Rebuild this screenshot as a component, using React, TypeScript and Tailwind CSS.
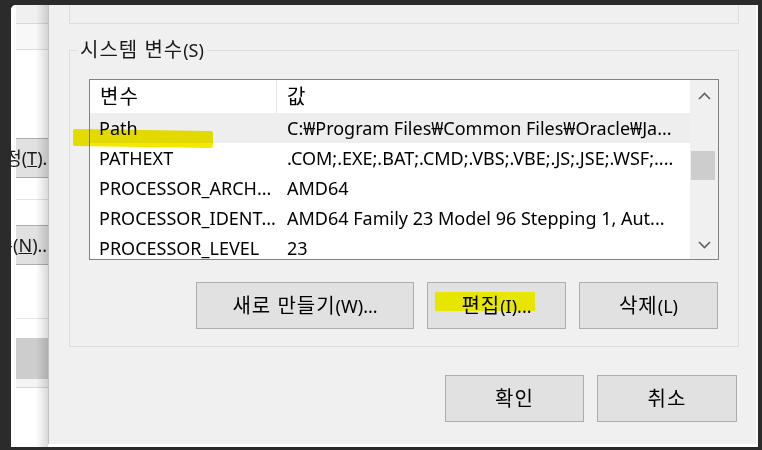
import React from 'react';

const rows = [
  { name: 'Path', value: 'C:₩Program Files₩Common Files₩Oracle₩Ja...', selected: true },
  { name: 'PATHEXT', value: '.COM;.EXE;.BAT;.CMD;.VBS;.VBE;.JS;.JSE;.WSF;....' },
  { name: 'PROCESSOR_ARCH...', value: 'AMD64' },
  { name: 'PROCESSOR_IDENT...', value: 'AMD64 Family 23 Model 96 Stepping 1, Aut...' },
  { name: 'PROCESSOR_LEVEL', value: '23' },
];

// Hangul runs are drawn a bit larger, the way Malgun Gothic sits next to Segoe UI
const KText = ({ text }: { text: string }) => (
  <>
    {text.split(/([\uAC00-\uD7A3]+(?: [\uAC00-\uD7A3]+)*)/).map((part, i) =>
      /[\uAC00-\uD7A3]/.test(part) ? (
        <span key={i} className="text-[20px] tracking-[1px]">
          {part}
        </span>
      ) : (
        <React.Fragment key={i}>{part}</React.Fragment>
      )
    )}
  </>
);

const Chevron = ({ up }: { up?: boolean }) => (
  <svg width="13" height="8" viewBox="0 0 13 8" className="block">
    <polyline
      points={up ? '1,7 6.5,1.5 12,7' : '1,1 6.5,6.5 12,1'}
      fill="none"
      stroke="#606060"
      strokeWidth="1.6"
    />
  </svg>
);

const WinButton = ({ label, className = '', children }: { label: string; className?: string; children?: React.ReactNode }) => (
  <div
    className={`relative flex items-center justify-center h-[47px] bg-[#e1e1e1] border border-[#adadad] text-[18px] text-black ${className}`}
  >
    {children}
    <span className="relative">
      <KText text={label} />
    </span>
  </div>
);

const BackWindow = () => (
  <div className="relative w-[37px] h-full bg-white pl-[5px] flex flex-col overflow-hidden text-[18px] text-[#1a1a1a]">
    <div className="h-[19px] bg-[#f0f0f0] border-b border-[#d9d9d9] shrink-0" />
    <div className="h-[26px] bg-[#f8f8f8] border-b border-[#dedede] shrink-0" />
    <div className="h-[88px] shrink-0" />
    <div className="h-[40px] shrink-0 bg-[#e1e1e1] border-y border-[#adadad] flex items-center justify-end whitespace-nowrap">
      <span className="-mr-[9px]">
        설정(<u>T</u>)...
      </span>
    </div>
    <div className="h-[22px] shrink-0 border-b border-[#e3e3e3]" />
    <div className="h-[25px] shrink-0" />
    <div className="h-[40px] shrink-0 bg-[#e1e1e1] border-y border-[#adadad] flex items-center justify-end whitespace-nowrap">
      <span className="-mr-[4px]">
        환경 변수(<u>N</u>)...
      </span>
    </div>
    <div className="h-[54px] shrink-0 border-b border-[#e3e3e3]" />
    <div className="h-[19px] shrink-0" />
    <div className="h-[41px] shrink-0 bg-[#cdcdcd]" />
    <div className="h-[9px] shrink-0 bg-[#f4f4f4] border-b border-[#d6d6d6]" />
    <div className="flex-1" />
    <div className="absolute right-0 top-0 bottom-0 w-[12px] bg-linear-to-r from-transparent to-black/15" />
  </div>
);

export default function App() {
  return (
    <div className="w-[762px] h-[450px] bg-[#2b2b2b] pt-[5px] pl-[11px] pr-[4px] pb-[3px] font-['Noto_Sans','Noto_Sans_CJK_KR',sans-serif] overflow-hidden">
      <div className="flex h-full bg-white rounded-tl-[5px] overflow-hidden">
        <BackWindow />

        <div className="flex-1 flex flex-col bg-[#f0f0f0] border-l border-[#c2c2c2] mr-[2px] mb-[3px]">
          {/* user variables group (cut off) */}
          <div className="ml-[20px] w-[670px] h-[19px] border-x border-b border-[#dcdcdc] shrink-0" />

          {/* system variables */}
          <fieldset className="ml-[20px] mt-[16px] w-[670px] border border-[#dcdcdc] p-0 m-0 shrink-0">
            <legend className="ml-[7px] px-[3px] text-[18px] leading-[20px] text-[#1a1a1a]">
              <KText text="시스템 변수(S)" />
            </legend>
            <div className="px-[19px] pb-[17px]">
              <div className="relative mt-[19px] h-[181px] border border-[#828282] bg-white flex">
                <div className="flex-1 flex flex-col overflow-hidden text-[18px] text-black">
                  <div className="h-[33px] flex items-center shrink-0">
                    <div className="w-[187px] pl-[10px] h-full flex items-center border-r border-[#e5e5e5]">
                      <KText text="변수" />
                    </div>
                    <div className="pl-[10px]">
                      <KText text="값" />
                    </div>
                  </div>
                  {rows.map((r) => (
                    <div
                      key={r.name}
                      className={`h-[30px] shrink-0 flex items-center whitespace-nowrap ${r.selected ? 'bg-[#eeeeee]' : ''}`}
                    >
                      <div className="w-[188px] pl-[9px] overflow-hidden">{r.name}</div>
                      <div className="pl-[9px] overflow-hidden">{r.value}</div>
                    </div>
                  ))}
                </div>
                <div className="w-[28px] bg-[#f0f0f0] flex flex-col shrink-0">
                  <div className="h-[32px] flex items-center justify-center">
                    <Chevron up />
                  </div>
                  <div className="flex-1 px-[1px] pr-[3px]">
                    <div className="mt-[39px] h-[29px] bg-[#cdcdcd]" />
                  </div>
                  <div className="h-[28px] flex items-center justify-center">
                    <Chevron />
                  </div>
                </div>
                {/* highlighter mark */}
                <div className="absolute left-[-17px] top-[50px] w-[140px] h-[17px] bg-[#f3e900] mix-blend-multiply rotate-[0.8deg] rounded-[2px]" />
              </div>

              <div className="mt-[22px] flex justify-end gap-[13px] pr-[1px]">
                <WinButton label="새로 만들기(W)..." className="w-[218px]" />
                <WinButton label="편집(I)..." className="w-[139px]">
                  <div className="absolute left-[7px] top-[9px] w-[100px] h-[19px] bg-[#e6e600]" />
                </WinButton>
                <WinButton label="삭제(L)" className="w-[139px]" />
              </div>
            </div>
          </fieldset>

          <div className="mt-[28px] flex justify-end gap-[13px] mr-[19px]">
            <WinButton label="확인" className="w-[139px]" />
            <WinButton label="취소" className="w-[140px]" />
          </div>
        </div>
      </div>
    </div>
  );
}
